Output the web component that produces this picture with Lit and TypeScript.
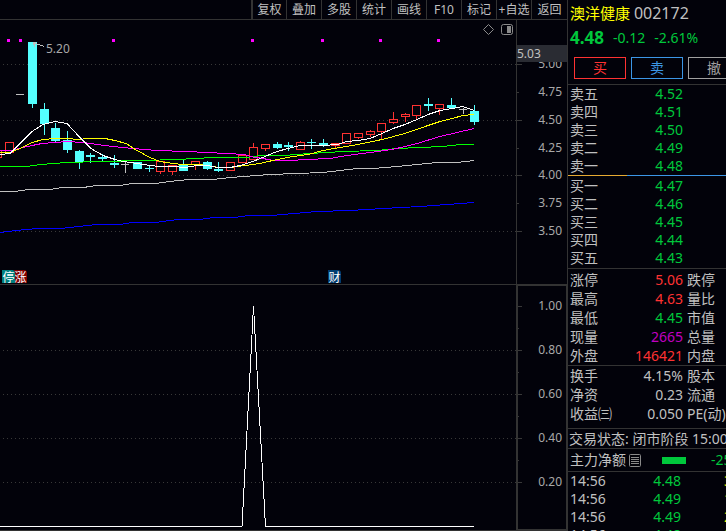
import { LitElement, html, svg, css } from "lit";
import { customElement } from "lit/decorators.js";

type Kind = "up" | "down" | "flat";
// centre x, body top, body bottom, wick top, wick bottom, kind
type Candle = [number, number, number, number, number, Kind];

const CANDLES: Candle[] = [
  [-3, 150, 157, 150, 157, "up"],
  [9, 142, 152, 142, 152, "up"],
  [20, 94, 94, 94, 94, "flat"],
  [32, 42, 103, 42, 107, "down"],
  [44, 109, 123, 103, 134, "down"],
  [55, 128, 140, 123, 141, "down"],
  [67, 140, 149, 131, 152, "down"],
  [79, 151, 161, 150, 168, "down"],
  [90, 155, 156, 153, 162, "down"],
  [102, 157, 158, 154, 160, "down"],
  [114, 163, 164, 155, 167, "down"],
  [125, 164, 164, 161, 172, "flat"],
  [137, 162, 168, 162, 168, "down"],
  [149, 168, 168, 165, 171, "down"],
  [160, 161, 171, 161, 173, "up"],
  [172, 165, 171, 165, 174, "up"],
  [183, 164, 170, 160, 170, "down"],
  [195, 161, 164, 161, 169, "up"],
  [207, 162, 168, 161, 169, "down"],
  [218, 169, 170, 162, 171, "down"],
  [230, 162, 170, 162, 170, "up"],
  [242, 155, 162, 155, 162, "up"],
  [253, 147, 159, 143, 159, "up"],
  [265, 144, 148, 144, 150, "up"],
  [277, 144, 147, 142, 148, "down"],
  [288, 145, 146, 142, 150, "down"],
  [300, 142, 149, 141, 149, "up"],
  [311, 142, 142, 139, 148, "down"],
  [323, 143, 145, 139, 146, "down"],
  [335, 143, 145, 143, 147, "up"],
  [346, 133, 143, 133, 143, "up"],
  [358, 133, 137, 133, 138, "up"],
  [370, 131, 134, 130, 136, "up"],
  [381, 123, 131, 123, 138, "up"],
  [393, 119, 122, 112, 123, "up"],
  [405, 114, 116, 113, 121, "up"],
  [416, 105, 115, 105, 118, "up"],
  [428, 104, 105, 98, 110, "down"],
  [439, 104, 108, 104, 114, "up"],
  [451, 105, 107, 98, 107, "down"],
  [463, 109, 109, 108, 113, "flat"],
  [474, 111, 121, 105, 124, "down"],
];

const AVERAGES: [string, string][] = [
  ["ma250", "0,232 16,230 37,228 61,228 97,224 120,224 132,222 155,222 178,219 200,219 213,217 235,217 248,215 271,215 317,211 350,210 383,208 420,206 474,202"],
  ["ma120", "0,191 15,191 28,189 50,189 62,187 83,187 97,185 120,185 132,183 155,183 178,180 190,179 213,179 230,177 270,174 323,172 357,168 373,168 397,166 437,162 457,162 474,160"],
  ["ma60", "0,166 27,166 40,164 67,162 100,161 143,160 177,159 213,157 247,157 260,155 283,155 310,153 343,151 377,150 397,148 420,147 443,146 460,144 474,144"],
  ["ma20", "0,150 12,150 23,147 32,145 42,143 55,142 67,141 83,142 97,144 113,146 133,148 157,150 187,151 207,152 227,153 245,154 250,156 263,158 273,160 290,160 307,159 330,158 347,155 370,152 392,149 405,146 417,143 440,136 457,132 474,128"],
  ["ma10", "0,152 10,152 20,148 32,142 43,139 55,138 67,138 79,139 87,138 105,138 115,140 126,143 137,150 150,157 160,161 173,163 182,164 200,164 213,166 218,167 230,167 245,165 260,163 277,159 293,156 308,154 323,150 340,147 358,144 382,139 405,133 428,125 440,121 452,118 463,115 474,114"],
  ["ma5", "0,154 10,153 14,149 32,131 43,124 55,121 67,123 79,136 91,148 103,155 115,159 123,161 137,163 150,165 160,166 173,166 185,167 197,165 207,165 218,167 230,167 240,165 253,161 265,156 277,151 288,148 300,145 323,145 337,144 347,141 358,140 370,138 382,133 393,128 405,124 417,119 428,114 440,110 452,108 463,106 474,110"],
];

const TOOLS = ["复权", "叠加", "多股", "统计", "画线", "F10", "标记", "+自选", "返回"];
const SIGNALS = [7, 19, 112, 251, 321, 379, 437];
const PRICE_TICKS: [string, number][] = [
  ["5.00", 64], ["4.75", 92], ["4.50", 120], ["4.25", 148],
  ["4.00", 175], ["3.75", 203], ["3.50", 231],
];
const INDICATOR_TICKS: [string, number][] = [
  ["1.00", 21], ["0.80", 65], ["0.60", 109], ["0.40", 153], ["0.20", 197],
];
const ASKS = [["卖五", "4.52"], ["卖四", "4.51"], ["卖三", "4.50"], ["卖二", "4.49"], ["卖一", "4.48"]];
const BIDS = [["买一", "4.47"], ["买二", "4.46"], ["买三", "4.45"], ["买四", "4.44"], ["买五", "4.43"]];
const STATS = [
  ["涨停", "5.06", "red", "跌停"],
  ["最高", "4.63", "red", "量比"],
  ["最低", "4.45", "green", "市值"],
  ["现量", "2665", "purple", "总量"],
  ["外盘", "146421", "red", "内盘"],
];
const RATIOS = [
  ["换手", "4.15%", "plain", "股本"],
  ["净资", "0.23", "plain", "流通"],
  ["收益㈢", "0.050", "plain", "PE(动)"],
];
const DEALS = [["14:56", "4.48", "3"], ["14:56", "4.49", "1"], ["14:56", "4.49", "2"], ["14:56", "4.48", "2"]];

@customElement("stock-chart")
class StockChart extends LitElement {
  static styles = css`
    :host {
      flex: 1;
      min-height: 0;
      display: grid;
      grid-template-columns: minmax(0, 1fr) 51px;
      grid-template-rows: 265px minmax(0, 1fr);
    }
    .plot, .scale { position: relative; overflow: hidden; }
    .main { border-bottom: 1px solid #333; }
    .scale.main { border-left: 1px solid #333; }
    .sub { border-bottom: 1px solid #333; }
    .scale.sub { border: solid #333; border-width: 1px 1px 2px 2px; }
    svg { display: block; width: 100%; height: 100%; shape-rendering: crispEdges; }
    text { font: 12px "Noto Sans", "Noto Sans CJK SC", sans-serif; fill: #a8a8a8; }
    .end { text-anchor: end; }
    .grid { stroke: #383838; stroke-dasharray: 1 3; }
    .tick { stroke: #383838; }
    .up rect { fill: #02020a; stroke: #ff3232; }
    .up line { stroke: #ff3232; }
    .down rect { fill: #54ffff; }
    .down line { stroke: #54ffff; }
    .flat line, .arrow { stroke: #c0c0c0; fill: none; }
    .signal { fill: #ff00ff; }
    polyline { fill: none; stroke-width: 1; }
    .ma5, .spike { stroke: #fff; }
    .ma10 { stroke: #ff0; }
    .ma20 { stroke: #f0f; }
    .ma60 { stroke: #0f0; }
    .ma120 { stroke: #c0c0c0; }
    .ma250 { stroke: #00f; }
    .modes { position: absolute; top: 3px; right: 3px; width: 32px; height: 13px; shape-rendering: auto; }
    .outline { fill: none; stroke: #8a8a8a; }
    .fill { fill: #8a8a8a; }
    .badge {
      position: absolute;
      bottom: 1px;
      width: 13px;
      height: 13px;
      font: 12px/13px "Noto Sans CJK SC", sans-serif;
      color: #fff;
      text-align: center;
      border-top-right-radius: 3px;
    }
    .halt { left: 2px; background: #008080; }
    .rise { left: 14px; background: #800000; }
    .report { left: 328px; background: #003c70; }
    .cursor {
      position: absolute;
      top: 25px;
      left: 0;
      right: 0;
      font: 12px/17px "Noto Sans", sans-serif;
      color: #c0c0c0;
      background: #2a2c33;
    }
  `;

  private candle([x, top, bottom, high, low, kind]: Candle) {
    const cx = x + 0.5;
    if (kind === "flat") {
      return svg`<g class="flat">
        <line x1=${x - 4} x2=${x + 4} y1=${top + 0.5} y2=${top + 0.5}></line>
        ${low > high ? svg`<line x1=${cx} x2=${cx} y1=${high} y2=${low + 1}></line>` : ""}
      </g>`;
    }
    const wicks = svg`<line x1=${cx} x2=${cx} y1=${high} y2=${low + 1}></line>`;
    const body = kind === "up"
      ? svg`<rect x=${x - 3.5} y=${top + 0.5} width="8" height=${bottom - top}></rect>`
      : svg`<rect x=${x - 4} y=${top} width="9" height=${bottom - top + 1}></rect>`;
    return svg`<g class=${kind}>${wicks}${body}</g>`;
  }

  private rule(y: number) {
    return svg`<line class="grid" x1="3" x2="100%" y1=${y + 0.5} y2=${y + 0.5}></line>`;
  }

  render() {
    return html`
      <div class="plot main">
        <svg role="img" aria-label="K线图">
          <g transform="translate(0 -20)">
            ${PRICE_TICKS.filter((_, i) => i % 2 === 0).map(([, y]) => this.rule(y))}
            ${SIGNALS.map((x) => svg`<rect class="signal" x=${x} y="39" width="3" height="3"></rect>`)}
            ${CANDLES.map((c) => this.candle(c))}
            ${AVERAGES.map(([name, points]) => svg`<polyline class=${name} points=${points} transform="translate(0 .5)"></polyline>`)}
            <path class="arrow" d="M44 46.500L33 42.500H36M33 42.500L35 46.500"></path>
            <text x="46" y="53">5.20</text>
          </g>
        </svg>
        <svg class="modes" viewBox="0 0 32 13" aria-hidden="true">
          <path class="outline" d="M7.500 1.500L12.500 6.500L7.500 11.500L2.500 6.500Z"></path>
          <rect class="outline" x="20.500" y="1.500" width="11" height="10" rx="2"></rect>
          <rect class="fill" x="26" y="3" width="4" height="7"></rect>
        </svg>
        <span class="badge rise">涨</span>
        <span class="badge halt">停</span>
        <span class="badge report">财</span>
      </div>
      <div class="scale main">
        <svg>
          <g transform="translate(0 -20)">
            ${PRICE_TICKS.map(([label, y], i) => svg`
              <line class="tick" x1="0" x2=${i % 2 ? 2 : 5} y1=${y + 0.5} y2=${y + 0.5}></line>
              <text class="end" x="45" y=${y + 4}>${label}</text>`)}
          </g>
        </svg>
        <span class="cursor">5.03</span>
      </div>
      <div class="plot sub">
        <svg role="img" aria-label="指标图">
          ${INDICATOR_TICKS.slice(1).map(([, y]) => this.rule(y))}
          <polyline class="spike" points="0,241.500 242,241.500 253.500,21 265.500,241.500 474,241.500"></polyline>
        </svg>
      </div>
      <div class="scale sub">
        <svg>
          <g transform="translate(0 -1)">
            ${INDICATOR_TICKS.map(([label, y], i) => svg`
              <line class="tick" x1="0" x2="4" y1=${y + 0.5} y2=${y + 0.5}></line>
              ${i < 4 ? svg`<line class="tick" x1="0" x2="1" y1=${y + 22.5} y2=${y + 22.5}></line>` : ""}
              <text class="end" x="44" y=${y + 4}>${label}</text>`)}
          </g>
        </svg>
      </div>
    `;
  }
}

@customElement("quote-panel")
class QuotePanel extends LitElement {
  static styles = css`
    :host {
      display: block;
      min-width: 0;
      overflow: hidden;
      border-left: 1px solid #333;
      font: 14px/18px "Noto Sans", "Noto Sans CJK SC", sans-serif;
      color: #c0c0c0;
      white-space: nowrap;
    }
    h1 { margin: 0; padding: 1px 2px; font-size: 15px; line-height: 24px; font-weight: 400; color: #ff0; }
    .code { font-size: 16px; color: #c0c0c0; }
    .price { display: flex; gap: 9px; align-items: center; height: 24px; padding: 0 2px; color: #00c83c; }
    .price strong { font-size: 17px; }
    .trade { display: flex; gap: 5px; padding: 7px 0 5px 6px; border-bottom: 1px solid #333; }
    button {
      flex: none;
      width: 52px;
      height: 22px;
      padding: 0;
      background: none;
      border: 1px solid;
      font: inherit;
      line-height: 18px;
    }
    .buy { color: #ff3232; }
    .sell { color: #3c96e6; }
    .cancel { color: #a0a0a0; }
    table { width: 100%; border-collapse: collapse; table-layout: fixed; }
    th, td { padding: 0; font-weight: 400; text-align: left; height: 18px; line-height: 18px; }
    th { padding-left: 2px; }
    .name { width: 46px; }
    .value { width: 69px; }
    td.num { text-align: right; }
    .stats th, .stats td { height: 19px; line-height: 19px; }
    .stats th.second { padding-left: 4px; }
    .stats, .status, .flow { border-bottom: 1px solid #333; }
    .bids { padding: 1px 0; border-bottom: 1px solid #333; }
    .stats { padding-top: 1px; }
    .ratios { padding: 0 0 5px; }
    .split { display: flex; height: 1px; }
    .split i { width: 59px; background: #e6aa32; }
    .split b { flex: 1; background: #3c96e6; }
    .status { height: 19px; line-height: 19px; padding-left: 1px; }
    .flow { display: flex; align-items: center; height: 22px; padding-left: 2px; }
    .flow svg { flex: none; width: 13px; height: 13px; margin-left: 3px; }
    .flow path, .flow rect { fill: none; stroke: #8a8a8a; }
    .bar { flex: none; width: 24px; height: 7px; margin: 0 25px 0 20px; background: #00c83c; }
    .deals .num { padding-right: 2px; }
    .deals .volume { padding-left: 41px; color: #e6e600; }
    .red { color: #ff3232; }
    .green { color: #00c83c; }
    .purple { color: #c000c0; }
  `;

  private levels(rows: string[][]) {
    return html`<table>
      <colgroup><col class="name"><col class="value"><col></colgroup>
      ${rows.map(([name, price]) => html`<tr><th scope="row">${name}</th><td class="num green">${price}</td><td></td></tr>`)}
    </table>`;
  }

  private stats(rows: string[][]) {
    return html`<table>
      <colgroup><col class="name"><col class="value"><col></colgroup>
      ${rows.map(([name, value, tone, next]) => html`<tr>
        <th scope="row">${name}</th><td class="num ${tone}">${value}</td><th class="second">${next}</th>
      </tr>`)}
    </table>`;
  }

  render() {
    return html`
      <h1>澳洋健康 <span class="code">002172</span></h1>
      <div class="price"><strong>4.48</strong><span>-0.12</span><span>-2.61%</span></div>
      <div class="trade">
        <button class="buy">买</button><button class="sell">卖</button><button class="cancel">撤</button>
      </div>
      ${this.levels(ASKS)}
      <div class="split"><i></i><b></b></div>
      <div class="bids">${this.levels(BIDS)}</div>
      <div class="stats">${this.stats(STATS)}</div>
      <div class="stats ratios">${this.stats(RATIOS)}</div>
      <div class="status">交易状态: 闭市阶段 15:00:00</div>
      <div class="flow">
        <span>主力净额</span>
        <svg viewBox="0 0 13 13" aria-hidden="true">
          <rect x=".5" y=".5" width="11" height="12" rx="1"></rect>
          <path d="M2 3.500H10M2 5.500H10M2 7.500H10M2 9.500H10"></path>
        </svg>
        <span class="bar"></span><span class="green">-25</span>
      </div>
      <table class="deals">
        <colgroup><col class="name"><col class="value"><col></colgroup>
        ${DEALS.map(([time, price, volume]) => html`<tr>
          <th scope="row">${time}</th><td class="num green">${price}</td><td class="volume">${volume}</td>
        </tr>`)}
      </table>
    `;
  }
}

@customElement("app-root")
class AppRoot extends LitElement {
  static styles = css`
    :host {
      display: grid;
      grid-template-columns: minmax(0, 1fr) 159px;
      grid-template-rows: minmax(0, 1fr);
      height: 100vh;
      overflow: hidden;
      background: #02020a;
    }
    .left { display: flex; flex-direction: column; min-width: 0; }
    nav { display: flex; justify-content: flex-end; height: 19px; border-bottom: 1px solid #333; }
    button {
      box-sizing: border-box;
      width: 35px;
      padding: 0;
      border: 0;
      border-left: 1px solid #333;
      background: none;
      color: #c0c0c0;
      font: 12px/18px "Noto Sans", "Noto Sans CJK SC", sans-serif;
      white-space: nowrap;
    }
    button:first-child { border-left-width: 2px; }
    button:last-child { width: 36px; }
  `;

  render() {
    return html`
      <div class="left">
        <nav>${TOOLS.map((t) => html`<button>${t}</button>`)}</nav>
        <stock-chart></stock-chart>
      </div>
      <quote-panel></quote-panel>
    `;
  }
}
